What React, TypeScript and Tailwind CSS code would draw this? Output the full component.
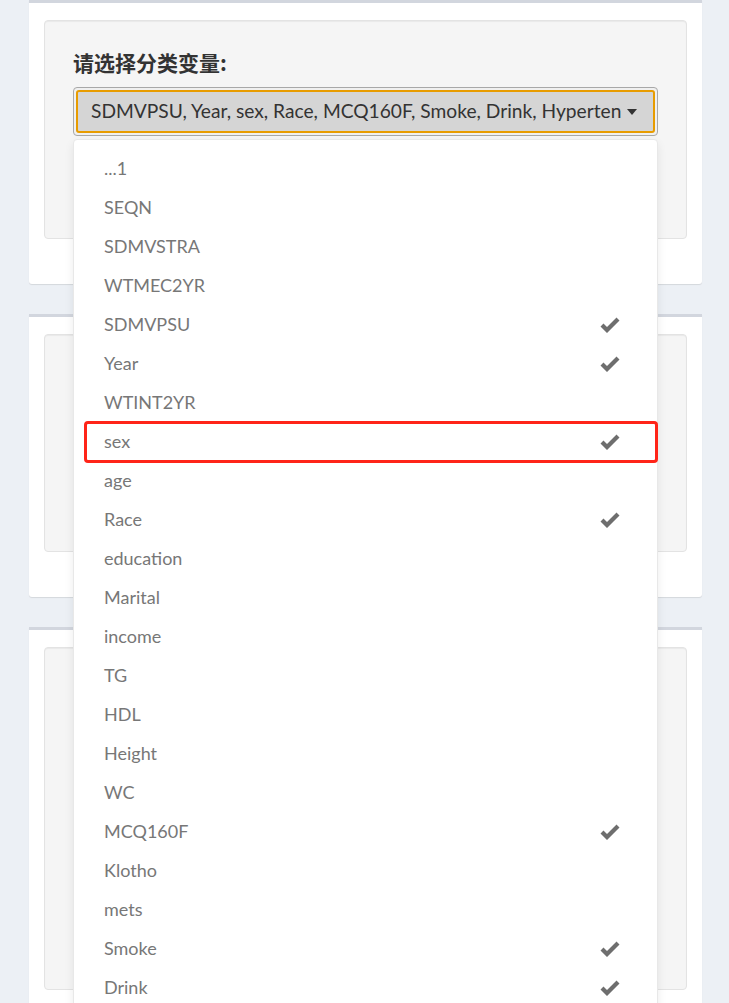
const items: { name: string; checked?: boolean }[] = [
  { name: "...1" },
  { name: "SEQN" },
  { name: "SDMVSTRA" },
  { name: "WTMEC2YR" },
  { name: "SDMVPSU", checked: true },
  { name: "Year", checked: true },
  { name: "WTINT2YR" },
  { name: "sex", checked: true },
  { name: "age" },
  { name: "Race", checked: true },
  { name: "education" },
  { name: "Marital" },
  { name: "income" },
  { name: "TG" },
  { name: "HDL" },
  { name: "Height" },
  { name: "WC" },
  { name: "MCQ160F", checked: true },
  { name: "Klotho" },
  { name: "mets" },
  { name: "Smoke", checked: true },
  { name: "Drink", checked: true },
];

function Check() {
  return (
    <svg width="22" height="18" viewBox="0 0 22 18" className="shrink-0">
      <path d="M1.5 10.5 L4.5 7.5 L8 11 L17.5 1.5 L20.5 4.5 L8 17 Z" fill="#6e6e6e" />
    </svg>
  );
}

function Box({ wellHeight, children }: { wellHeight: number; children?: React.ReactNode }) {
  return (
    <div className="rounded-b-[3px] border-t-[3px] border-[#d2d6de] bg-white px-[15px] pb-[45px] pt-[17px] shadow-[0_1px_1px_rgba(0,0,0,0.1)]">
      <div
        className="rounded-[4px] border border-[#e3e3e3] bg-[#f5f5f5] shadow-[inset_0_1px_1px_rgba(0,0,0,0.05)]"
        style={{ height: wellHeight }}
      >
        {children}
      </div>
    </div>
  );
}

export default function App() {
  return (
    <div
      className="relative h-[1003px] overflow-hidden bg-[#ecf0f5] pl-[29px] pr-[27px]"
      style={{ fontFamily: "Lato, 'Noto Sans CJK SC', sans-serif" }}
    >
      <div className="flex flex-col gap-[30px]">
        <Box wellHeight={219}>
          <div className="px-[28px] pt-[28px]">
            <div
              className="text-[21px] font-bold leading-[26px] text-[#333]"
              style={{ fontFamily: "'Noto Sans CJK SC', sans-serif" }}
            >
              请选择分类变量:
            </div>
            <div className="relative mt-[12px]">
              <div className="rounded-[4px] border border-[#a8a8a8] bg-[#f0f0f0] p-[2px]">
                <div className="flex h-[43px] items-center rounded-[3px] border-2 border-[#e89c00] bg-[#d5d5d5] pl-[13px] pr-[14px]">
                  <span className="whitespace-nowrap text-[19.2px] text-[#333]">
                    SDMVPSU, Year, sex, Race, MCQ160F, Smoke, Drink, Hyperten
                  </span>
                  <span className="ml-[6px] h-0 w-0 border-x-[5px] border-t-[6px] border-x-transparent border-t-[#333]" />
                </div>
              </div>
              <div className="absolute left-0 right-0 top-[52px] z-10 h-[900px] rounded-[4px] border border-[#e8e8e8] bg-white pt-[9px] shadow-[0_4px_10px_rgba(0,0,0,0.08)]">
                {items.map((it) => (
                  <div
                    key={it.name}
                    className="relative flex h-[39px] items-center justify-between pl-[30px] pr-[36px] text-[18px] text-[#777]"
                  >
                    <span>{it.name}</span>
                    {it.checked && <Check />}
                    {it.name === "sex" && (
                      <div className="absolute bottom-[-2px] left-[10px] right-[-1px] top-[-1px] rounded-[4px] border-[3px] border-[#ff2418]" />
                    )}
                  </div>
                ))}
              </div>
            </div>
          </div>
        </Box>
        <Box wellHeight={218} />
        <Box wellHeight={343} />
      </div>
    </div>
  );
}
